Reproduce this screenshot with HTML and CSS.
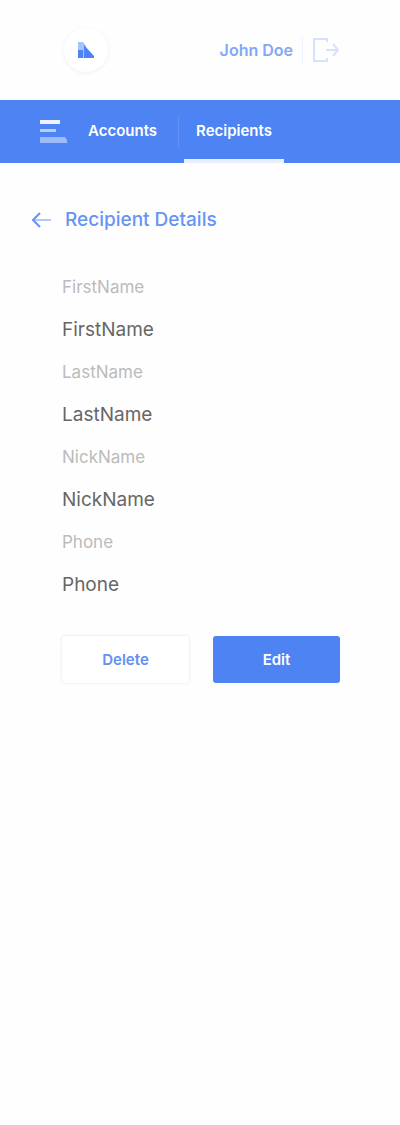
FILE: index.html
```html
<!DOCTYPE html>
<html lang="en">
<head>
<meta charset="utf-8">
<meta name="viewport" content="width=device-width, initial-scale=1">
<title>Recipient Details</title>
<link rel="stylesheet" href="styles.css">
</head>
<body>
<header class="header">
  <a class="logo" href="#" aria-label="Home">
    <svg width="18" height="18" viewBox="0 0 18 18" aria-hidden="true">
      <path class="logo-light" d="M1 1h5l3 4v12H1z"/>
      <path class="logo-dark" d="M1 9h5v8H1zM7 4l10 11v2H7z"/>
    </svg>
  </a>
  <div class="account">
    <a class="user" href="#">John Doe</a>
    <button class="logout" type="button" aria-label="Log out">
      <svg width="28" height="26" viewBox="0 0 28 26" fill="none" stroke="currentColor" stroke-width="2" aria-hidden="true">
        <path d="M15 5V2H2v22h13v-3M14 13h12M21 7l5 6-5 6"/>
      </svg>
    </button>
  </div>
</header>
<nav class="nav">
  <button class="menu" type="button" aria-label="Menu">
    <svg width="28" height="24" viewBox="0 0 28 24" aria-hidden="true">
      <path fill="#fff" fill-opacity=".9" d="M0 0h20v4H0z"/>
      <path fill="#fff" fill-opacity=".6" d="M0 9h16v3H0z"/>
      <path fill="#fff" fill-opacity=".45" d="M0 17h25l2 3v3H0z"/>
    </svg>
  </button>
  <a class="tab" href="#">Accounts</a>
  <span class="divider"></span>
  <a class="tab tab-active" href="#" aria-current="page">Recipients</a>
</nav>
<main class="main">
  <div class="heading">
    <a class="back" href="#" aria-label="Back">
      <svg width="20" height="16" viewBox="0 0 20 16" fill="none" stroke="currentColor" stroke-width="2" aria-hidden="true">
        <path d="M8 1L1 8l7 7"/><path stroke-opacity=".5" d="M2 8h17"/>
      </svg>
    </a>
    <h1 class="title">Recipient Details</h1>
  </div>
  <dl class="details">
    <div class="field"><dt class="label">FirstName</dt><dd class="value">FirstName</dd></div>
    <div class="field"><dt class="label">LastName</dt><dd class="value">LastName</dd></div>
    <div class="field"><dt class="label">NickName</dt><dd class="value">NickName</dd></div>
    <div class="field"><dt class="label">Phone</dt><dd class="value">Phone</dd></div>
  </dl>
  <div class="actions">
    <button class="button button-plain" type="button">Delete</button>
    <button class="button button-primary" type="button">Edit</button>
  </div>
</main>
</body>
</html>
```
FILE: styles.css
```css
* { box-sizing: border-box; }
body {
  margin: 0;
  background: #fefefe;
  color: #666;
  font-family: Inter, "Liberation Sans", sans-serif;
}
a { color: inherit; text-decoration: none; }
button { font: inherit; color: inherit; border: 0; background: none; padding: 0; cursor: pointer; }
svg { display: block; }
.header {
  display: flex;
  align-items: center;
  justify-content: space-between;
  height: 100px;
  padding: 0 60px 0 64px;
}
.logo {
  display: grid;
  place-items: center;
  width: 44px;
  height: 44px;
  border-radius: 50%;
  background: #fff;
  box-shadow: 0 1px 4px #4d83f31c;
}
.logo-light { fill: #a9c3fa; }
.logo-dark { fill: #4d83f3; }
.account { display: flex; align-items: center; gap: 9px; }
.user { color: #82a8f7; font-size: 16px; font-weight: 600; }
.logout { padding-left: 9px; border-left: 1px solid #edf2fe; color: #d6e2fd; }
.nav {
  display: flex;
  align-items: center;
  height: 63px;
  padding-left: 40px;
  background: #4d83f3;
  color: #fff;
}
.menu { margin-right: 8px; }
.tab {
  display: flex;
  align-items: center;
  align-self: stretch;
  padding: 4px 12px 2px;
  border-bottom: 4px solid transparent;
  font-size: 15px;
  font-weight: 600;
}
.tab-active { border-bottom-color: #e8effe; }
.divider { width: 1px; height: 30px; margin: 0 5px 0 9px; background: #6593f5; }
.main { padding: 44px 60px 44px 32px; }
.heading { display: flex; align-items: center; gap: 13px; color: #6694f6; }
.title { margin: 0; font-size: 19px; line-height: 26px; font-weight: 500; }
.details { display: grid; gap: 18px; margin: 43px 0 0 30px; }
.field { display: grid; gap: 19px; }
.label { color: #bbb; font-size: 17px; line-height: 22px; }
.value { margin: 0; font-size: 19px; line-height: 26px; }
.actions { display: grid; grid-template-columns: 1fr 1fr; gap: 24px; margin: 38px 0 0 30px; }
.button { height: 47px; border-radius: 3px; font-size: 15px; font-weight: 600; }
.button-plain { background: #fff; color: #6290f4; box-shadow: 0 0 3px #0000001f; }
.button-primary { background: #4d83f3; color: #fff; }
```
